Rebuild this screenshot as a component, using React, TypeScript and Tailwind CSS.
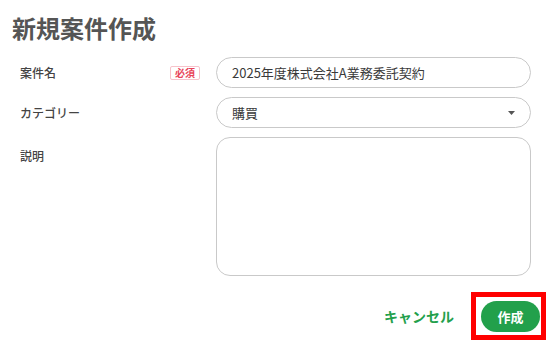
export default function App() {
  return (
    <div className="w-[548px] h-[345px] bg-white font-['Noto_Sans_CJK_JP','Noto_Sans',sans-serif] text-[#444]">
      <h1 className="pl-[12px] pt-[14px] text-[24px] leading-[28px] font-bold text-[#555]">
        新規案件作成
      </h1>

      <form className="mt-[15px] pl-[20px] pr-[17px] flex flex-col gap-[9px]">
        <div className="flex items-center">
          <label className="flex-1 text-[12px] font-medium">案件名</label>
          <span className="h-[14px] w-[30px] flex items-center justify-center border border-[#f7c3cb] rounded-[2px] text-[10px] leading-none font-bold text-[#e8455a]">
            必須
          </span>
          <div className="ml-[16px] w-[315px] h-[31px] rounded-full border border-[#c9c9c9] flex items-center px-[15px] text-[13px] text-[#3a3a3a]">
            2025年度株式会社A業務委託契約
          </div>
        </div>

        <div className="flex items-center">
          <label className="flex-1 text-[12px] font-medium">カテゴリー</label>
          <div className="ml-[16px] w-[315px] h-[31px] rounded-full border border-[#c9c9c9] flex items-center justify-between pl-[15px] pr-[15px] text-[13px] text-[#3a3a3a]">
            <span>購買</span>
            <svg width="7" height="4" viewBox="0 0 7 4">
              <path d="M0 0h7L3.5 4z" fill="#555" />
            </svg>
          </div>
        </div>

        <div className="flex items-start">
          <label className="flex-1 pt-[10px] text-[12px] font-medium">説明</label>
          <div className="ml-[16px] w-[315px] h-[139px] rounded-[14px] border border-[#c9c9c9]" />
        </div>
      </form>

      <div className="mt-[16px] pr-[2px] flex items-center justify-end">
        <button className="mr-[17px] text-[14px] font-bold text-[#23a04c]">キャンセル</button>
        <div className="border-[5px] border-[#ff0000] pl-[5px] pt-[4px] pr-[1px] pb-[3px]">
          <button className="w-[59px] h-[31px] rounded-full bg-[#22a04b] text-white text-[13px] font-bold">
            作成
          </button>
        </div>
      </div>
    </div>
  );
}
